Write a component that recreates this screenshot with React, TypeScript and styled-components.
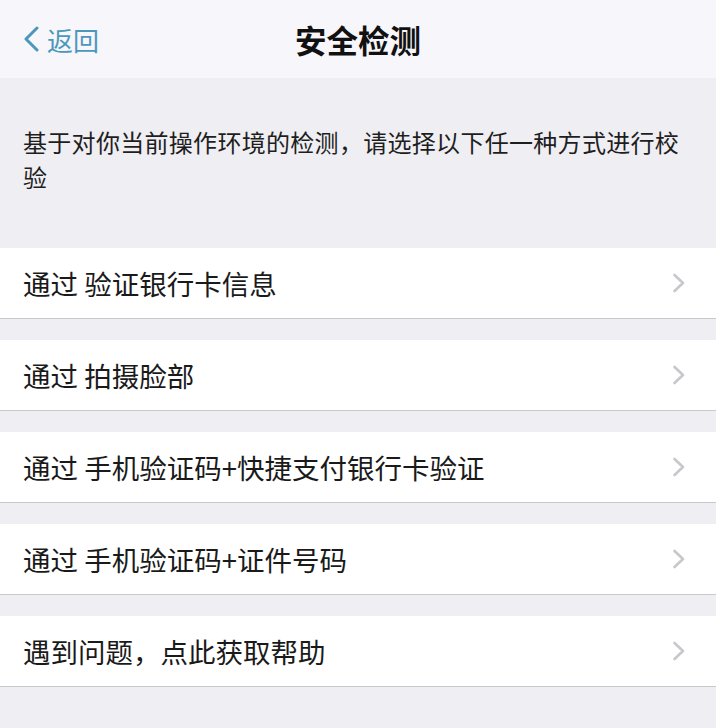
import React from 'react';
import styled, { createGlobalStyle } from 'styled-components';

const GlobalStyle = createGlobalStyle`
  html, body {
    margin: 0;
    padding: 0;
    background: #efeef3;
  }
  body {
    font-family: "Noto Sans CJK SC", "Noto Sans", sans-serif;
    -webkit-font-smoothing: antialiased;
  }
`;

const Page = styled.div`
  width: 716px;
  min-height: 728px;
  background: #efeef3;
  display: flex;
  flex-direction: column;
`;

const NavBar = styled.header`
  height: 78px;
  background: #f7f6fa;
  display: flex;
  align-items: center;
  justify-content: center;
  position: relative;
`;

const BackButton = styled.button`
  position: absolute;
  left: 22px;
  top: 0;
  bottom: 0;
  display: flex;
  align-items: center;
  gap: 7px;
  border: none;
  background: none;
  padding: 0;
  color: #4c98bd;
  font-family: inherit;
  font-size: 26px;
  cursor: pointer;
`;

const Title = styled.h1`
  margin: 0;
  font-size: 31.5px;
  font-weight: 600;
  color: #111;
  letter-spacing: 0;
`;

const Notice = styled.p`
  margin: 0;
  padding: 46px 30px 54px 23px;
  font-size: 24px;
  letter-spacing: 0.3px;
  line-height: 35px;
  color: #1e1e1e;
`;

const List = styled.div`
  display: flex;
  flex-direction: column;
  gap: 21px;
`;

const Row = styled.div`
  height: 70px;
  background: #fff;
  border-bottom: 1px solid #c9c8cd;
  display: flex;
  align-items: center;
  justify-content: space-between;
  padding: 0 30px 0 23px;
  cursor: pointer;
`;

const RowLabel = styled.span`
  font-size: 27.5px;
  color: #1a1a1a;
  white-space: pre;
`;

const BackChevron = () => (
  <svg width="18" height="26" viewBox="0 0 18 26" fill="none">
    <path d="M15 2 L4 13 L15 24" stroke="currentColor" strokeWidth="3" strokeLinecap="round" strokeLinejoin="round" />
  </svg>
);

const RowChevron = () => (
  <svg width="14" height="20" viewBox="0 0 14 20" fill="none">
    <path d="M2.5 2 L11 10 L2.5 18" stroke="#c7c7cc" strokeWidth="2.6" strokeLinecap="round" strokeLinejoin="round" />
  </svg>
);

const options = [
  '通过 验证银行卡信息',
  '通过 拍摄脸部',
  '通过 手机验证码+快捷支付银行卡验证',
  '通过 手机验证码+证件号码',
  '遇到问题，点此获取帮助',
];

export default function App() {
  return (
    <Page>
      <GlobalStyle />
      <NavBar>
        <BackButton>
          <BackChevron />
          返回
        </BackButton>
        <Title>安全检测</Title>
      </NavBar>
      <Notice>基于对你当前操作环境的检测，请选择以下任一种方式进行校验</Notice>
      <List>
        {options.map((o) => (
          <Row key={o}>
            <RowLabel>{o}</RowLabel>
            <RowChevron />
          </Row>
        ))}
      </List>
    </Page>
  );
}
